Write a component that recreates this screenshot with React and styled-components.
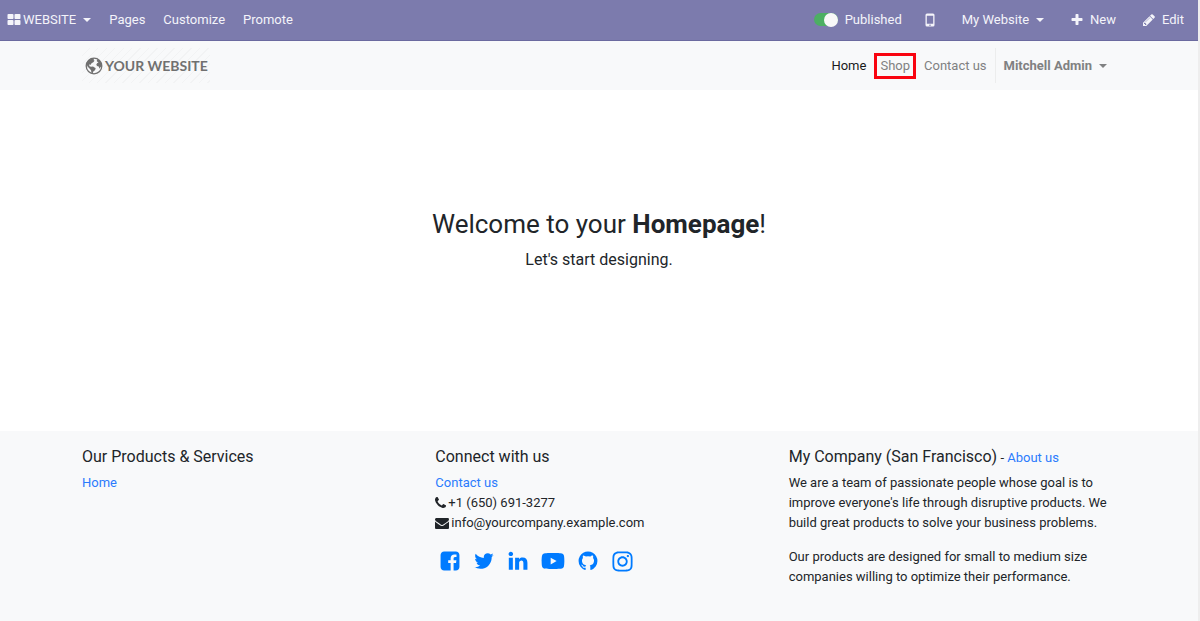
import React from "react";
import styled, { createGlobalStyle } from "styled-components";
import { FaYoutube, FaInstagram } from "react-icons/fa";

const GlobalStyle = createGlobalStyle`
  * {
    box-sizing: border-box;
  }

  body {
    margin: 0;
    background: #f8f9fa;
    color: #212529;
    font-family: Roboto, "Liberation Sans", sans-serif;
    font-size: 13px;
    line-height: 20px;
  }

  #root {
    min-height: 100vh;
    display: flex;
  }
`;

const Page = styled.div`
  flex: 1;
  display: flex;
  flex-direction: column;
  background: #f8f9fa;
  border-right: 2px solid #eeeeee;
`;

const AdminBar = styled.nav`
  display: flex;
  justify-content: space-between;
  height: 41px;
  padding: 0 14px 1px 7px;
  background: #7c7bad;
  border-bottom: 1px solid #6b6a9f;
`;

const AdminGroup = styled.div`
  display: flex;
  align-items: center;
  gap: ${props => props.$gap}px;
`;

const AdminButton = styled.button`
  display: flex;
  align-items: center;
  gap: 7px;
  padding: 0;
  border: 0;
  background: none;
  color: #f4f4fa;
  font: inherit;
  cursor: pointer;
`;

const Caret = styled.span`
  border-top: 4px solid currentColor;
  border-left: 4px solid transparent;
  border-right: 4px solid transparent;
`;

const Publish = styled.label`
  display: flex;
  align-items: center;
  gap: 7px;
  color: #f4f4fa;
`;

const Switch = styled.input`
  appearance: none;
  display: flex;
  align-items: center;
  justify-content: flex-end;
  width: 24px;
  height: 13px;
  margin: 0;
  border-radius: 7px;
  background: #4caf63;

  &::before {
    content: "";
    flex: none;
    width: 14px;
    height: 14px;
    border-radius: 50%;
    background: #f8f8f8;
  }
`;

const Container = styled.div`
  width: 100%;
  max-width: 1060px;
  margin: 0 auto;
  padding: 0 15px 0 13px;
`;

const Header = styled.header`
  padding: 7px 0;
  background: #f8f9fa;
`;

const HeaderRow = styled(Container)`
  display: flex;
  align-items: center;
  justify-content: space-between;
`;

const Brand = styled.a`
  display: flex;
  align-items: center;
  gap: 2px;
  height: 35px;
  padding: 0 2px 0 3px;
  background: repeating-linear-gradient(
    135deg,
    transparent 0 5px,
    #f2f3f4 5px 6px
  );
  color: #707070;
  font-family: Lato, sans-serif;
  font-size: 14px;
  font-weight: 700;
  text-decoration: none;
`;

const SiteMenu = styled.nav`
  display: flex;
  align-items: center;
`;

const MenuLink = styled.a`
  padding: 0 8px;
  color: ${props => (props.$active ? "#191a1b" : "#808182")};
  text-decoration: none;
`;

const MarkedLink = styled(MenuLink)`
  padding: 0 3px;
  border: 3px solid #f90410;
`;

const UserButton = styled.button`
  display: flex;
  align-items: center;
  gap: 7px;
  height: 35px;
  padding: 0 7px 0 8px;
  border: 0;
  border-left: 1px solid #eceded;
  background: none;
  color: #808182;
  font: inherit;
  font-weight: 700;
`;

const Hero = styled.main`
  flex: 0 0 341px;
  display: flex;
  flex-direction: column;
  align-items: center;
  padding-top: 118px;
  background: #ffffff;
  text-align: center;
`;

const Title = styled.h1`
  margin: 0 0 8px;
  font-size: 26px;
  font-weight: 400;
  line-height: 32px;
`;

const Lead = styled.p`
  margin: 0;
  font-size: 16px;
  line-height: 24px;
`;

const Footer = styled.footer`
  padding: 16px 0 30px;
`;

const Columns = styled(Container)`
  display: grid;
  grid-template-columns: repeat(3, 1fr);
  gap: 28px;
`;

const Heading = styled.h2`
  display: inline-block;
  margin: 0 0 6px;
  font-size: 16px;
  font-weight: 400;
  line-height: 20px;
`;

const List = styled.ul`
  margin: 0;
  padding: 0;
  list-style: none;
`;

const ContactItem = styled.li`
  display: flex;
  align-items: center;
  gap: 2px;
`;

const Link = styled.a`
  color: #2b7bfd;
  text-decoration: none;
`;

const Social = styled.div`
  display: flex;
  align-items: center;
  gap: 12px;
  margin-top: 16px;
  padding-left: 4px;

  a {
    display: flex;
    color: #007bff;
  }
`;

const Paragraph = styled.p`
  margin: 0 0 14px;
`;

const icons = {
  grid: {
    box: "0 0 1792 1792",
    d:
      "M832 1024v384q0 52-38 90t-90 38h-512q-52 0-90-38t-38-90v-384q0-52 38-90t90-38h512q52 0 90 38t38 90zm0-768v384q0 52-38 90t-90 38h-512q-52 0-90-38t-38-90v-384q0-52 38-90t90-38h512q52 0 90 38t38 90zm896 768v384q0 52-38 90t-90 38h-512q-52 0-90-38t-38-90v-384q0-52 38-90t90-38h512q52 0 90 38t38 90zm0-768v384q0 52-38 90t-90 38h-512q-52 0-90-38t-38-90v-384q0-52 38-90t90-38h512q52 0 90 38t38 90z"
  },
  plus: {
    box: "128 0 1536 1792",
    d:
      "M1600 736v192q0 40-28 68t-68 28h-416v416q0 40-28 68t-68 28h-192q-40 0-68-28t-28-68v-416h-416q-40 0-68-28t-28-68v-192q0-40 28-68t68-28h416v-416q0-40 28-68t68-28h192q40 0 68 28t28 68v416h416q40 0 68 28t28 68z"
  },
  pencil: {
    box: "128 0 1536 1792",
    d:
      "M491 1536l91-91-235-235-91 91v107h128v128h107zm523-928q0-22-22-22-10 0-17 7l-542 542q-7 7-7 17 0 22 22 22 10 0 17-7l542-542q7-7 7-17zm-54-192l416 416-832 832h-416v-416zm683 96q0 53-37 90l-166 166-416-416 166-165q36-38 90-38 53 0 91 38l235 234q37 39 37 91z"
  },
  phone: {
    box: "192 0 1408 1792",
    d:
      "M1600 1240q0 27-10 70.5t-21 68.5q-21 50-122 106-94 51-186 51-27 0-53-3.5t-57.5-12.5-47-14.5-55.5-20.5-49-18q-98-35-175-83-127-79-264-216t-216-264q-48-77-83-175-3-9-18-49t-20.5-55.5-14.5-47-12.5-57.5-3.5-53q0-92 51-186 56-101 106-122 25-11 68.5-21t70.5-10q14 0 21 3 18 6 53 76 11 19 30 54t35 63.5 31 53.5q3 4 17.5 25t21.5 35.5 7 28.5q0 20-28.5 50t-62 55-62 53-28.5 46q0 9 5 22.5t8.5 20.5 14 24 11.5 19q76 137 174 235t235 174q2 1 19 11.5t24 14 20.5 8.5 22.5 5q18 0 46-28.5t53-62 55-62 50-28.5q14 0 28.5 7t35.5 21.5 25 17.5q25 15 53.5 31t63.5 35 54 30q70 35 76 53 3 7 3 21z"
  },
  mail: {
    box: "0 0 1792 1792",
    d:
      "M1792 710v794q0 66-47 113t-113 47h-1472q-66 0-113-47t-47-113v-794q44 49 101 87 362 246 497 345 57 42 92.5 65.5t94.5 48 110 24.5h2q51 0 110-24.5t94.5-48 92.5-65.5q170-123 498-345 57-39 100-87zm0-294q0 79-49 151t-122 123q-376 261-468 325-10 7-42.5 31t-54 38.5-52 32.5-57.5 27-50 9h-2q-23 0-50-9t-57.5-27-52-32.5-54-38.5-42.5-31q-91-64-262-182.5t-205-142.5q-62-42-117-115.5t-55-136.5q0-78 41.5-130t118.5-52h1472q65 0 112.5 47t47.5 113z"
  },
  facebook: {
    box: "0 0 1792 1792",
    d:
      "M1376 128q119 0 203.5 84.5t84.5 203.5v960q0 119-84.5 203.5t-203.5 84.5h-188v-595h199l30-232h-229v-148q0-56 23.5-84t91.5-28l122-1v-207q-63-9-178-9-136 0-217.5 80t-81.5 226v171h-200v232h200v595h-532q-119 0-203.5-84.5t-84.5-203.5v-960q0-119 84.5-203.5t203.5-84.5h960z"
  },
  twitter: {
    box: "0 0 1792 1792",
    d:
      "M1684 408q-67 98-162 167 1 14 1 42 0 130-38 259.5t-115.5 248.5-184.5 210.5-258 146-323 54.5q-271 0-496-145 35 4 78 4 225 0 401-138-105-2-188-64.5t-114-159.5q33 5 61 5 43 0 85-11-112-23-185.5-111.5t-73.5-205.5v-4q68 38 146 41-66-44-105-115t-39-154q0-88 44-163 121 149 294.5 238.5t371.5 99.5q-8-38-8-74 0-134 94.5-228.5t228.5-94.5q140 0 236 102 109-21 205-78-37 115-142 178 93-10 186-50z"
  },
  linkedin: {
    box: "0 0 1792 1792",
    d:
      "M477 625v991h-330v-991h330zm21-306q1 73-50.5 122t-135.5 49h-2q-82 0-132-49t-50-122q0-74 51.5-122.5t134.5-48.5 133 48.5 51 122.5zm1166 729v568h-329v-530q0-105-40.5-164.5t-126.5-59.5q-63 0-105.5 34.5t-63.5 85.5q-11 30-11 81v553h-329q2-399 2-647t-1-296l-1-48h329v144h-2q20-32 41-56t56.5-52 87-43.5 114.5-15.5q171 0 275 113.5t104 332.5z"
  },
  github: {
    box: "0 0 1792 1792",
    d:
      "M896 128q209 0 385.5 103t279.5 279.5 103 385.5q0 251-146.5 451.5t-378.5 277.5q-27 5-40-7t-13-30q0-3 .5-76.5t.5-134.5q0-97-52-142 57-6 102.5-18t94-39 81-66.5 53-105 20.5-150.5q0-119-79-206 37-91-8-204-28-9-81 11t-92 44l-38 24q-93-26-192-26t-192 26q-16-11-42.5-27t-83.5-38.5-85-13.5q-45 113-8 204-79 87-79 206 0 85 20.5 150t52.5 105 80.5 67 94 39 102.5 18q-39 36-49 103-21 10-45 15t-57 5-65.5-21.5-55.5-62.5q-19-32-48.5-52t-49.5-24l-20-3q-21 0-29 4.5t-5 11.5 9 14 13 12l7 5q22 10 43.500 38t31.500 51l10 23q13 38 44 61.500t67 30 69.500 7 55.500-3.500l23-4q0 38 .5 88.500t.5 54.500q0 18-13 30t-40 7q-232-77-378.500-277.500t-146.500-451.500q0-209 103-385.500t279.500-279.500 385.500-103z"
  }
};

const Icon = ({ name, width = 14, height = 14 }) => (
  <svg
    width={width}
    height={height}
    viewBox={icons[name].box}
    fill="currentColor"
    aria-hidden="true"
  >
    <path d={icons[name].d} />
  </svg>
);

const PhoneFrame = () => (
  <svg width="10" height="14" viewBox="0 0 9 14" aria-hidden="true">
    <path
      fill="currentColor"
      fillRule="evenodd"
      d="M1.5 0.5h6a1.5 1.5 0 0 1 1.5 1.500v10a1.500 1.500 0 0 1-1.500 1.500h-6a1.500 1.500 0 0 1-1.500-1.500v-10a1.500 1.500 0 0 1 1.500-1.500zM1.300 2.700v8h6.400v-8zM4.500 11.400a.7.7 0 1 0 .01 0z"
    />
  </svg>
);

const Globe = () => (
  <svg width="18" height="18" viewBox="0 0 18 18" aria-hidden="true">
    <circle
      cx="9"
      cy="9"
      r="7.800"
      fill="none"
      stroke="currentColor"
      strokeWidth="1.300"
    />
    <path
      fill="currentColor"
      d="M2 5.500L4 3l3-1.700 2.500.2-1 1.500 1 .8-1.200 1.500-1.800 1-.8 1.500-1.700-.3.500 1.800 1.500.4 2-.2 2.700 1.800-.7 1.900-1.500 1-1 2.300-1-.5-.5-2.700-1.500-1.800-2-2-1-2.500zM12 2.200l2.500 1.300 2 3 .3 3-1.300.5-1 1.800-.8-2.300-1.700-.5-.7-1.500 1-1.500 1.200-.5-1.700-1.300z"
    />
  </svg>
);

const App = () => (
  <Page>
    <GlobalStyle />
    <AdminBar>
      <AdminGroup $gap={18}>
        <AdminButton>
          <AdminGroup $gap={2}>
            <Icon name="grid" />
            WEBSITE
          </AdminGroup>
          <Caret />
        </AdminButton>
        <AdminButton>Pages</AdminButton>
        <AdminButton>Customize</AdminButton>
        <AdminButton>Promote</AdminButton>
      </AdminGroup>
      <AdminGroup $gap={27}>
        <AdminGroup $gap={23}>
          <Publish>
            <Switch type="checkbox" role="switch" defaultChecked />
            Published
          </Publish>
          <AdminButton aria-label="Mobile preview">
            <PhoneFrame />
          </AdminButton>
        </AdminGroup>
        <AdminButton>
          My Website
          <Caret />
        </AdminButton>
        <AdminButton>
          <Icon name="plus" width={12} />
          New
        </AdminButton>
        <AdminButton>
          <Icon name="pencil" width={12} />
          Edit
        </AdminButton>
      </AdminGroup>
    </AdminBar>

    <Header>
      <HeaderRow>
        <Brand href="#">
          <Globe />
          YOUR WEBSITE
        </Brand>
        <SiteMenu>
          <MenuLink href="#" $active>
            Home
          </MenuLink>
          <MarkedLink href="#shop">Shop</MarkedLink>
          <MenuLink href="#contact">Contact us</MenuLink>
          <UserButton>
            Mitchell Admin
            <Caret />
          </UserButton>
        </SiteMenu>
      </HeaderRow>
    </Header>

    <Hero>
      <Title>
        Welcome to your <b>Homepage</b>!
      </Title>
      <Lead>Let's start designing.</Lead>
    </Hero>

    <Footer>
      <Columns>
        <section>
          <Heading>Our Products &amp; Services</Heading>
          <List>
            <li>
              <Link href="#">Home</Link>
            </li>
          </List>
        </section>
        <section>
          <Heading>Connect with us</Heading>
          <List>
            <li>
              <Link href="#contact">Contact us</Link>
            </li>
            <ContactItem>
              <Icon name="phone" width={11} />
              +1 (650) 691-3277
            </ContactItem>
            <ContactItem>
              <Icon name="mail" />
              info@yourcompany.example.com
            </ContactItem>
          </List>
          <Social>
            <a href="#facebook" aria-label="Facebook">
              <Icon name="facebook" width={22} height={22} />
            </a>
            <a href="#twitter" aria-label="Twitter">
              <Icon name="twitter" width={22} height={22} />
            </a>
            <a href="#linkedin" aria-label="LinkedIn">
              <Icon name="linkedin" width={22} height={22} />
            </a>
            <a href="#youtube" aria-label="YouTube">
              <FaYoutube size={24} />
            </a>
            <a href="#github" aria-label="GitHub">
              <Icon name="github" width={22} height={22} />
            </a>
            <a href="#instagram" aria-label="Instagram">
              <FaInstagram size={23} />
            </a>
          </Social>
        </section>
        <section>
          <Heading>My Company (San Francisco)</Heading> -{" "}
          <Link href="#about">About us</Link>
          <Paragraph>
            We are a team of passionate people whose goal is to improve
            everyone's life through disruptive products. We build great products
            to solve your business problems.
          </Paragraph>
          <Paragraph>
            Our products are designed for small to medium size companies willing
            to optimize their performance.
          </Paragraph>
        </section>
      </Columns>
    </Footer>
  </Page>
);

export default App;
